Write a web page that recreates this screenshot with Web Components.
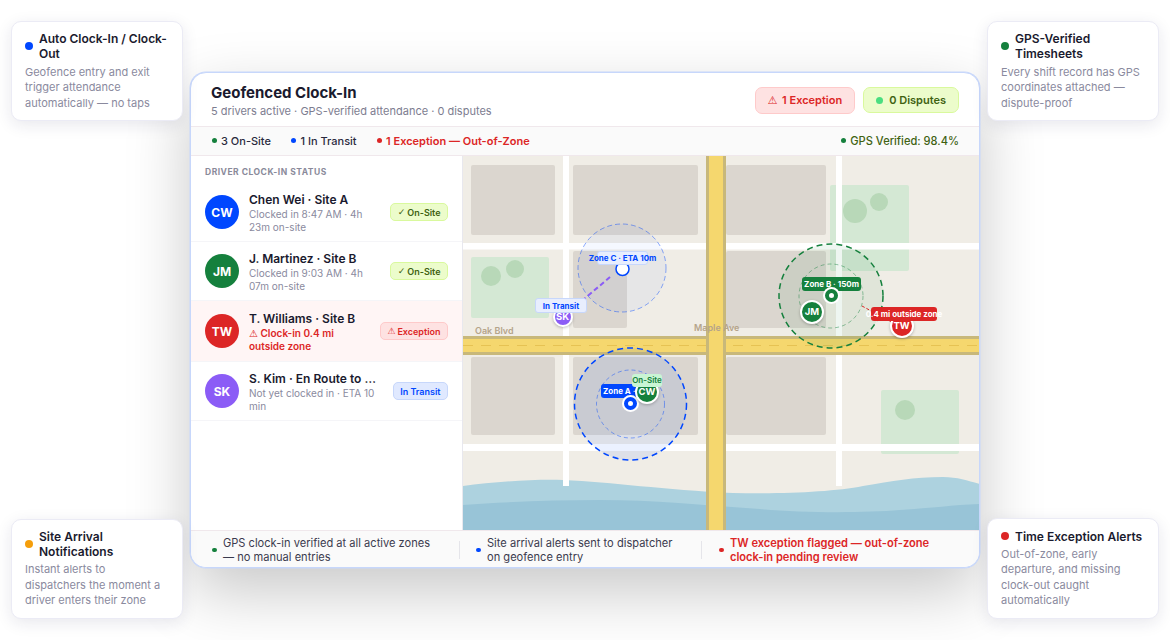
<!DOCTYPE html>
<html>
<head>
<meta charset="utf-8">
<title>Geofenced Clock-In</title>
<style>
html, body { margin: 0; background: #fff; }
body { width: 1170px; height: 640px; overflow: hidden; font-family: Inter, "Liberation Sans", sans-serif; color: #1a1a2e; }
.g { font-family: "DejaVu Sans", sans-serif; font-weight: 700; }
</style>
</head>
<body>
<clock-page>
    <side-column slot="left">
        <call-out color="#0047ff" heading="Auto Clock-In / Clock-Out">Geofence entry and exit trigger attendance automatically — no taps</call-out>
        <call-out color="#f59e0b" heading="Site Arrival Notifications">Instant alerts to dispatchers the moment a driver enters their zone</call-out>
    </side-column>
    <clock-card slot="center">
        <card-header slot="header"></card-header>
        <stat-bar slot="stats"></stat-bar>
        <driver-list slot="list">
            <driver-row initials="CW" avatar="#0047ff" name="Chen Wei · Site A" status="onsite">Clocked in 8:47 AM · 4h 23m on-site</driver-row>
            <driver-row initials="JM" avatar="#15803d" name="J. Martinez · Site B" status="onsite">Clocked in 9:03 AM · 4h 07m on-site</driver-row>
            <driver-row initials="TW" avatar="#dc2626" name="T. Williams · Site B" status="exception" alert><span class="g">⚠</span> Clock-in 0.4 mi outside zone</driver-row>
            <driver-row initials="SK" avatar="#8b5cf6" name="S. Kim · En Route to Site C" status="transit">Not yet clocked in · ETA 10 min</driver-row>
        </driver-list>
        <geo-map slot="map"></geo-map>
        <foot-bar slot="foot"></foot-bar>
    </clock-card>
    <side-column slot="right">
        <call-out color="#15803d" heading="GPS-Verified Timesheets">Every shift record has GPS coordinates attached — dispute-proof</call-out>
        <call-out color="#dc2626" heading="Time Exception Alerts">Out-of-zone, early departure, and missing clock-out caught automatically</call-out>
    </side-column>
</clock-page>

<script>
function shadow(el, html) {
    el.attachShadow({ mode: 'open' }).innerHTML = html;
}

class ClockPage extends HTMLElement {
    constructor() {
        super();
        shadow(this, `
            <style>
                :host { display: grid; grid-template-columns: 172px 790px 172px; column-gap: 7px; padding: 20.7px 11px 0; height: 619px; box-sizing: border-box; }
                .mid { padding-top: 51.3px; }
            </style>
            <slot name="left"></slot>
            <div class="mid"><slot name="center"></slot></div>
            <slot name="right"></slot>
        `);
    }
}

class SideColumn extends HTMLElement {
    constructor() {
        super();
        shadow(this, `
            <style>:host { display: flex; flex-direction: column; justify-content: space-between; height: 598.3px; position: relative; z-index: 2; }</style>
            <slot></slot>
        `);
    }
}

class CallOut extends HTMLElement {
    constructor() {
        super();
        shadow(this, `
            <style>
                :host { display: block; box-sizing: border-box; width: 172px; background: #fff; border: 1px solid #ebebf5; border-radius: 10px; padding: 9.5px 13px 9px; box-shadow: 0 4px 16px rgba(30, 30, 80, .1); }
                .head { display: flex; align-items: center; gap: 6px; font-size: 12px; font-weight: 600; line-height: 15px; color: #1a1a2e; margin-bottom: 3.4px; }
                i { flex: none; width: 8px; height: 8px; border-radius: 50%; }
                .body { font-size: 11px; line-height: 15.5px; color: #8a8a9e; }
            </style>
            <div class="head"><i></i><span></span></div>
            <div class="body"><slot></slot></div>
        `);
        this.shadowRoot.querySelector('i').style.background = this.getAttribute('color');
        this.shadowRoot.querySelector('span').textContent = this.getAttribute('heading');
    }
}

class ClockCard extends HTMLElement {
    constructor() {
        super();
        shadow(this, `
            <style>
                :host { display: block; box-sizing: border-box; width: 790px; height: 496px; background: #fff; border: 1px solid #c7d7fb; border-radius: 16px; overflow: hidden; box-shadow: 0 0 0 .5px #c7d7fb, 0 24px 64px rgba(0, 0, 0, .22); position: relative; }
                .frame { display: flex; flex-direction: column; height: 100%; }
                .main { flex: 1; display: flex; min-height: 0; }
            </style>
            <div class="frame">
                <slot name="header"></slot>
                <slot name="stats"></slot>
                <div class="main"><slot name="list"></slot><slot name="map"></slot></div>
                <slot name="foot"></slot>
            </div>
        `);
    }
}

class CardHeader extends HTMLElement {
    constructor() {
        super();
        shadow(this, `
            <style>
                :host { display: flex; box-sizing: border-box; height: 54px; align-items: center; justify-content: space-between; padding: 2px 20px 0; border-bottom: 1px solid #f0e8ec; }
                h1 { margin: 1px 0 0; font-size: 15px; line-height: 18px; font-weight: 700; color: #1a1a2e; }
                p { margin: 1.5px 0 0; font-size: 11px; line-height: 14px; color: #7d7d90; }
                .badges { display: flex; gap: 8px; align-items: center; }
                .b { display: flex; align-items: center; box-sizing: border-box; border-radius: 7px; font-size: 11px; font-weight: 600; padding: 0 12px; }
                .red { height: 27px; background: #fee2e2; border: 1px solid #fecaca; color: #dc2626; gap: 4.5px; }
                .lime { height: 26px; background: #ecfccb; border: 1px solid #d9f99d; color: #3f6212; gap: 6px; }
                .lime i { width: 7px; height: 7px; border-radius: 50%; background: #4ade80; }
                .g { font-family: "DejaVu Sans", sans-serif; font-weight: 700; }
            </style>
            <div>
                <h1>Geofenced Clock-In</h1>
                <p>5 drivers active · GPS-verified attendance · 0 disputes</p>
            </div>
            <div class="badges">
                <div class="b red"><span class="g">⚠</span><span>1 Exception</span></div>
                <div class="b lime"><i></i>0 Disputes</div>
            </div>
        `);
    }
}

class StatBar extends HTMLElement {
    constructor() {
        super();
        shadow(this, `
            <style>
                :host { display: flex; box-sizing: border-box; height: 29px; align-items: center; gap: 20.5px; padding: 0 20px 0 21px; background: #fafafa; border-bottom: 1px solid #f0e8ec; font-size: 11px; font-weight: 500; color: #2a2a3e; }
                span { display: flex; align-items: center; gap: 4px; }
                i { width: 5px; height: 5px; border-radius: 50%; }
                .x { color: #dc2626; font-weight: 600; }
                .gps { margin-left: auto; color: #3f6212; font-size: 11.1px; }
            </style>
            <span><i style="background:#15803d"></i>3 On-Site</span>
            <span><i style="background:#0047ff"></i>1 In Transit</span>
            <span class="x"><i style="background:#dc2626"></i>1 Exception — Out-of-Zone</span>
            <span class="gps"><i style="background:#15803d"></i>GPS Verified: 98.4%</span>
        `);
    }
}

class DriverList extends HTMLElement {
    constructor() {
        super();
        shadow(this, `
            <style>
                :host { display: block; box-sizing: border-box; flex: none; width: 272px; background: #fff; border-right: 1px solid #e8e8ee; }
                .t { font-size: 8.5px; font-weight: 700; letter-spacing: .5px; color: #8a8a9a; padding: 11px 14px 5px; line-height: 11px; }
            </style>
            <div class="t">DRIVER CLOCK-IN STATUS</div>
            <slot></slot>
        `);
    }
}

const STATUS = {
    onsite: { html: '<span class="g">✓</span><span>On-Site</span>', css: 'background:#ecfccb;border-color:#d9f99d;color:#3f6212' },
    exception: { html: '<span class="g">⚠</span><span>Exception</span>', css: 'background:#fee2e2;border-color:#fecaca;color:#dc2626' },
    transit: { html: 'In Transit', css: 'background:#e0e9ff;border-color:#c7d7fb;color:#0047ff' }
};

class DriverRow extends HTMLElement {
    constructor() {
        super();
        const alert = this.hasAttribute('alert');
        const st = STATUS[this.getAttribute('status')];
        shadow(this, `
            <style>
                :host { display: flex; box-sizing: border-box; height: ${alert ? 61 : 59}px; align-items: center; gap: 10px; padding: 1px 14px 0; border-bottom: 1px solid #f5f5f8; ${alert ? 'background:#fff5f5;' : ''} }
                .av { flex: none; width: 34px; height: 34px; border-radius: 50%; display: flex; align-items: center; justify-content: center; color: #fff; font-size: 12px; font-weight: 700; }
                .txt { flex: 1; min-width: 0; padding-top: 1px; }
                .n { font-size: 12px; line-height: 15px; font-weight: 600; color: #1a1a2e; white-space: nowrap; overflow: hidden; text-overflow: ellipsis; }
                .s { font-size: 10px; line-height: ${alert ? 13.4 : 12.5}px; margin-top: 1px; color: ${alert ? '#dc2626' : '#8a8a9e'}; ${alert ? 'font-weight:600;' : ''} }
                .st { flex: none; box-sizing: border-box; height: 18px; display: flex; align-items: center; gap: 2px; padding: 0 6.5px; border: 1px solid; border-radius: 5px; font-size: 9px; font-weight: 600; }
                .g { font-family: "DejaVu Sans", sans-serif; font-weight: 700; }
            </style>
            <div class="av"></div>
            <div class="txt"><div class="n"></div><div class="s"><slot></slot></div></div>
            <div class="st"></div>
        `);
        const root = this.shadowRoot;
        const av = root.querySelector('.av');
        av.textContent = this.getAttribute('initials');
        av.style.background = this.getAttribute('avatar');
        root.querySelector('.n').textContent = this.getAttribute('name');
        const badge = root.querySelector('.st');
        badge.innerHTML = st.html;
        badge.style.cssText = st.css;
    }
}

class FootBar extends HTMLElement {
    constructor() {
        super();
        shadow(this, `
            <style>
                :host { display: flex; box-sizing: border-box; height: 37px; flex: none; align-items: center; padding: 2px 20px 0 21px; background: #fafafa; border-top: 1px solid #f0e8ec; font-size: 11.1px; line-height: 14px; color: #3a3a4e; }
                .it { display: flex; align-items: center; gap: 6.5px; box-sizing: border-box; }
                i { flex: none; width: 4.5px; height: 4.5px; border-radius: 50%; }
                .d { flex: none; width: 1px; height: 18px; background: #e5e5ea; margin: 0 16px; }
                .x { color: #dc2626; font-weight: 600; margin-left: 1px; }
            </style>
            <div class="it" style="width:231px"><i style="background:#15803d"></i><span style="width:212px">GPS clock-in verified at all active zones — no manual entries</span></div>
            <div class="d"></div>
            <div class="it" style="width:209px"><i style="background:#0047ff"></i><span>Site arrival alerts sent to dispatcher on geofence entry</span></div>
            <div class="d"></div>
            <div class="it x" style="width:224px"><i style="background:#dc2626"></i><span>TW exception flagged — out-of-zone clock-in pending review</span></div>
        `);
    }
}

class MapPin extends HTMLElement {
    constructor() {
        super();
        const size = this.getAttribute('size') || 22;
        shadow(this, `
            <style>
                :host { position: absolute; box-sizing: border-box; width: ${size}px; height: ${size}px; margin: ${-size / 2}px 0 0 ${-size / 2}px; border-radius: 50%; border: 2px solid #fff; display: flex; align-items: center; justify-content: center; color: #fff; font-size: 9.5px; font-weight: 700; box-shadow: 0 1px 3px rgba(0, 0, 0, .25); }
            </style>
            <slot></slot>
        `);
        this.style.left = this.getAttribute('x') + 'px';
        this.style.top = this.getAttribute('y') + 'px';
        this.style.background = this.getAttribute('color');
    }
}

class ZoneDot extends HTMLElement {
    constructor() {
        super();
        shadow(this, `
            <style>
                :host { position: absolute; box-sizing: border-box; width: 17px; height: 17px; margin: -8.5px 0 0 -8.5px; border-radius: 50%; background: #fff; display: flex; align-items: center; justify-content: center; }
                div { width: 5px; height: 5px; border-radius: 50%; background: #fff; border: 4px solid; }
            </style>
            <div></div>
        `);
        this.style.left = this.getAttribute('x') + 'px';
        this.style.top = this.getAttribute('y') + 'px';
        this.shadowRoot.querySelector('div').style.borderColor = this.getAttribute('color');
    }
}

class MapTag extends HTMLElement {
    constructor() {
        super();
        shadow(this, `
            <style>
                :host { position: absolute; box-sizing: border-box; display: flex; justify-content: center; align-items: center; height: 14px; border-radius: 3px; font-size: 8px; line-height: 14px; font-weight: 700; white-space: nowrap; }
            </style>
            <slot></slot>
        `);
        this.style.left = this.getAttribute('x') + 'px';
        this.style.top = this.getAttribute('y') + 'px';
        this.style.width = this.getAttribute('w') + 'px';
        this.style.cssText += this.getAttribute('look');
    }
}

class GeoMap extends HTMLElement {
    constructor() {
        super();
        const blocks = [
            [8, 9, 84, 70], [110, 9, 125, 70], [263, 9, 100, 70],
            [110, 95, 54, 77], [263, 95, 100, 77],
            [8, 201, 84, 78], [110, 201, 125, 78], [263, 201, 100, 78]
        ].map(b => `<rect x="${b[0]}" y="${b[1]}" width="${b[2]}" height="${b[3]}" rx="2" fill="#dbd6cf"/>`).join('');
        shadow(this, `
            <style>
                :host { display: block; flex: 1; position: relative; overflow: hidden; background: #f0ede6; }
                svg { position: absolute; left: 0; top: 0; }
                text { font-family: Inter, "Liberation Sans", sans-serif; font-size: 9px; font-weight: 600; fill: #b5a48a; }
            </style>
            <svg width="517" height="375" viewBox="0 0 517 375">
                ${blocks}
                <rect x="8" y="101" width="78" height="61" rx="2" fill="#d4e8d4"/>
                <circle cx="28" cy="120" r="10" fill="#b8d8b8"/>
                <circle cx="52" cy="113" r="9" fill="#b8d8b8"/>
                <rect x="367" y="29" width="79" height="86" rx="2" fill="#d4e8d4"/>
                <circle cx="392" cy="55" r="12" fill="#b8d8b8"/>
                <circle cx="416" cy="46" r="9" fill="#b8d8b8"/>
                <rect x="418" y="234" width="78" height="64" rx="2" fill="#d4e8d4"/>
                <circle cx="442" cy="254" r="10" fill="#b8d8b8"/>

                <path d="M0 330 C30 326 70 323 100 324 C150 326 200 334 270 337 C320 338 370 336 400 330 C430 325 450 321 480 321 C495 321 505 325 517 328 V375 H0Z" fill="#add2df"/>
                <path d="M0 349 C40 346 90 344 137 344 C190 344 240 349 297 353 C340 357 400 357 437 354 C470 352 490 349 517 348 V375 H0Z" fill="#98c4d7"/>

                <rect x="0" y="87" width="517" height="6.5" fill="#fff"/>
                <rect x="0" y="288" width="517" height="7" fill="#fff"/>
                <rect x="100" y="0" width="6" height="330" fill="#fff"/>
                <rect x="373" y="0" width="6" height="330" fill="#fff"/>

                <rect x="0" y="180" width="517" height="19" fill="#c8b87a"/>
                <rect x="0" y="183" width="517" height="13" fill="#f5d76e"/>
                <line x1="0" y1="189.5" x2="517" y2="189.5" stroke="#e6c253" stroke-width="1" stroke-dasharray="10 8"/>
                <rect x="243" y="0" width="20" height="375" fill="#c8b87a"/>
                <rect x="246" y="0" width="14" height="375" fill="#f5d76e"/>

                <text x="12" y="178">Oak Blvd</text>
                <text x="231" y="175">Maple Ave</text>

                <circle cx="159" cy="112" r="44" fill="rgba(0,71,255,.04)" stroke="#0047ff" stroke-opacity=".45" stroke-width="1" stroke-dasharray="5 3"/>
                <line x1="147" y1="121" x2="100" y2="161" stroke="#8b5cf6" stroke-width="2" stroke-dasharray="5 3"/>
                <circle cx="159.5" cy="113" r="6.5" fill="#fff" stroke="#0047ff" stroke-width="1.5"/>

                <circle cx="167.5" cy="248" r="56" fill="rgba(0,71,255,.08)" stroke="#0047ff" stroke-width="1.5" stroke-dasharray="6 4"/>
                <circle cx="167.5" cy="248" r="34" fill="none" stroke="#0047ff" stroke-opacity=".45" stroke-width="1" stroke-dasharray="4 3"/>

                <circle cx="368" cy="140" r="52" fill="rgba(21,128,61,.07)" stroke="#15803d" stroke-width="1.5" stroke-dasharray="6 4"/>
                <circle cx="368" cy="140" r="32" fill="none" stroke="#15803d" stroke-opacity=".45" stroke-width="1" stroke-dasharray="4 3"/>
                <line x1="399" y1="150" x2="438" y2="171" stroke="#dc2626" stroke-width="1" stroke-dasharray="3 2"/>
            </svg>

            <map-tag x="134" y="95" w="51" look="background:#e8eefe;border:1px solid #c7d7fb;color:#0047ff">Zone C · ETA 10m</map-tag>
            <map-pin x="99.5" y="161" size="20" color="#8b5cf6">SK</map-pin>
            <map-tag x="72" y="142.5" w="52" look="height:15px;background:#e8eefe;border:1px solid #c7d7fb;color:#0047ff">In Transit</map-tag>

            <map-tag x="138" y="228" w="48" look="background:#0047ff;color:#fff;justify-content:flex-start;padding-left:2px">Zone A ·</map-tag>
            <zone-dot x="167.5" y="248" color="#0047ff"></zone-dot>
            <map-pin x="184" y="236" size="24" color="#15803d">CW</map-pin>
            <map-tag x="169" y="218" w="30" look="height:13px;background:#c9f5d4;color:#15803d;font-weight:600">On-Site</map-tag>

            <map-tag x="339" y="121" w="59" look="background:#15803d;color:#fff">Zone B · 150m</map-tag>
            <zone-dot x="368" y="140" color="#15803d"></zone-dot>
            <map-pin x="349" y="156" size="24" color="#15803d">JM</map-pin>
            <map-pin x="438.5" y="170" size="24" color="#dc2626">TW</map-pin>
            <map-tag x="408" y="151" w="66" look="background:#dc2626;color:#fff">0.4 mi outside zone</map-tag>
        `);
    }
}

customElements.define('clock-page', ClockPage);
customElements.define('side-column', SideColumn);
customElements.define('call-out', CallOut);
customElements.define('clock-card', ClockCard);
customElements.define('card-header', CardHeader);
customElements.define('stat-bar', StatBar);
customElements.define('driver-list', DriverList);
customElements.define('driver-row', DriverRow);
customElements.define('foot-bar', FootBar);
customElements.define('map-pin', MapPin);
customElements.define('zone-dot', ZoneDot);
customElements.define('map-tag', MapTag);
customElements.define('geo-map', GeoMap);
</script>
</body>
</html>
